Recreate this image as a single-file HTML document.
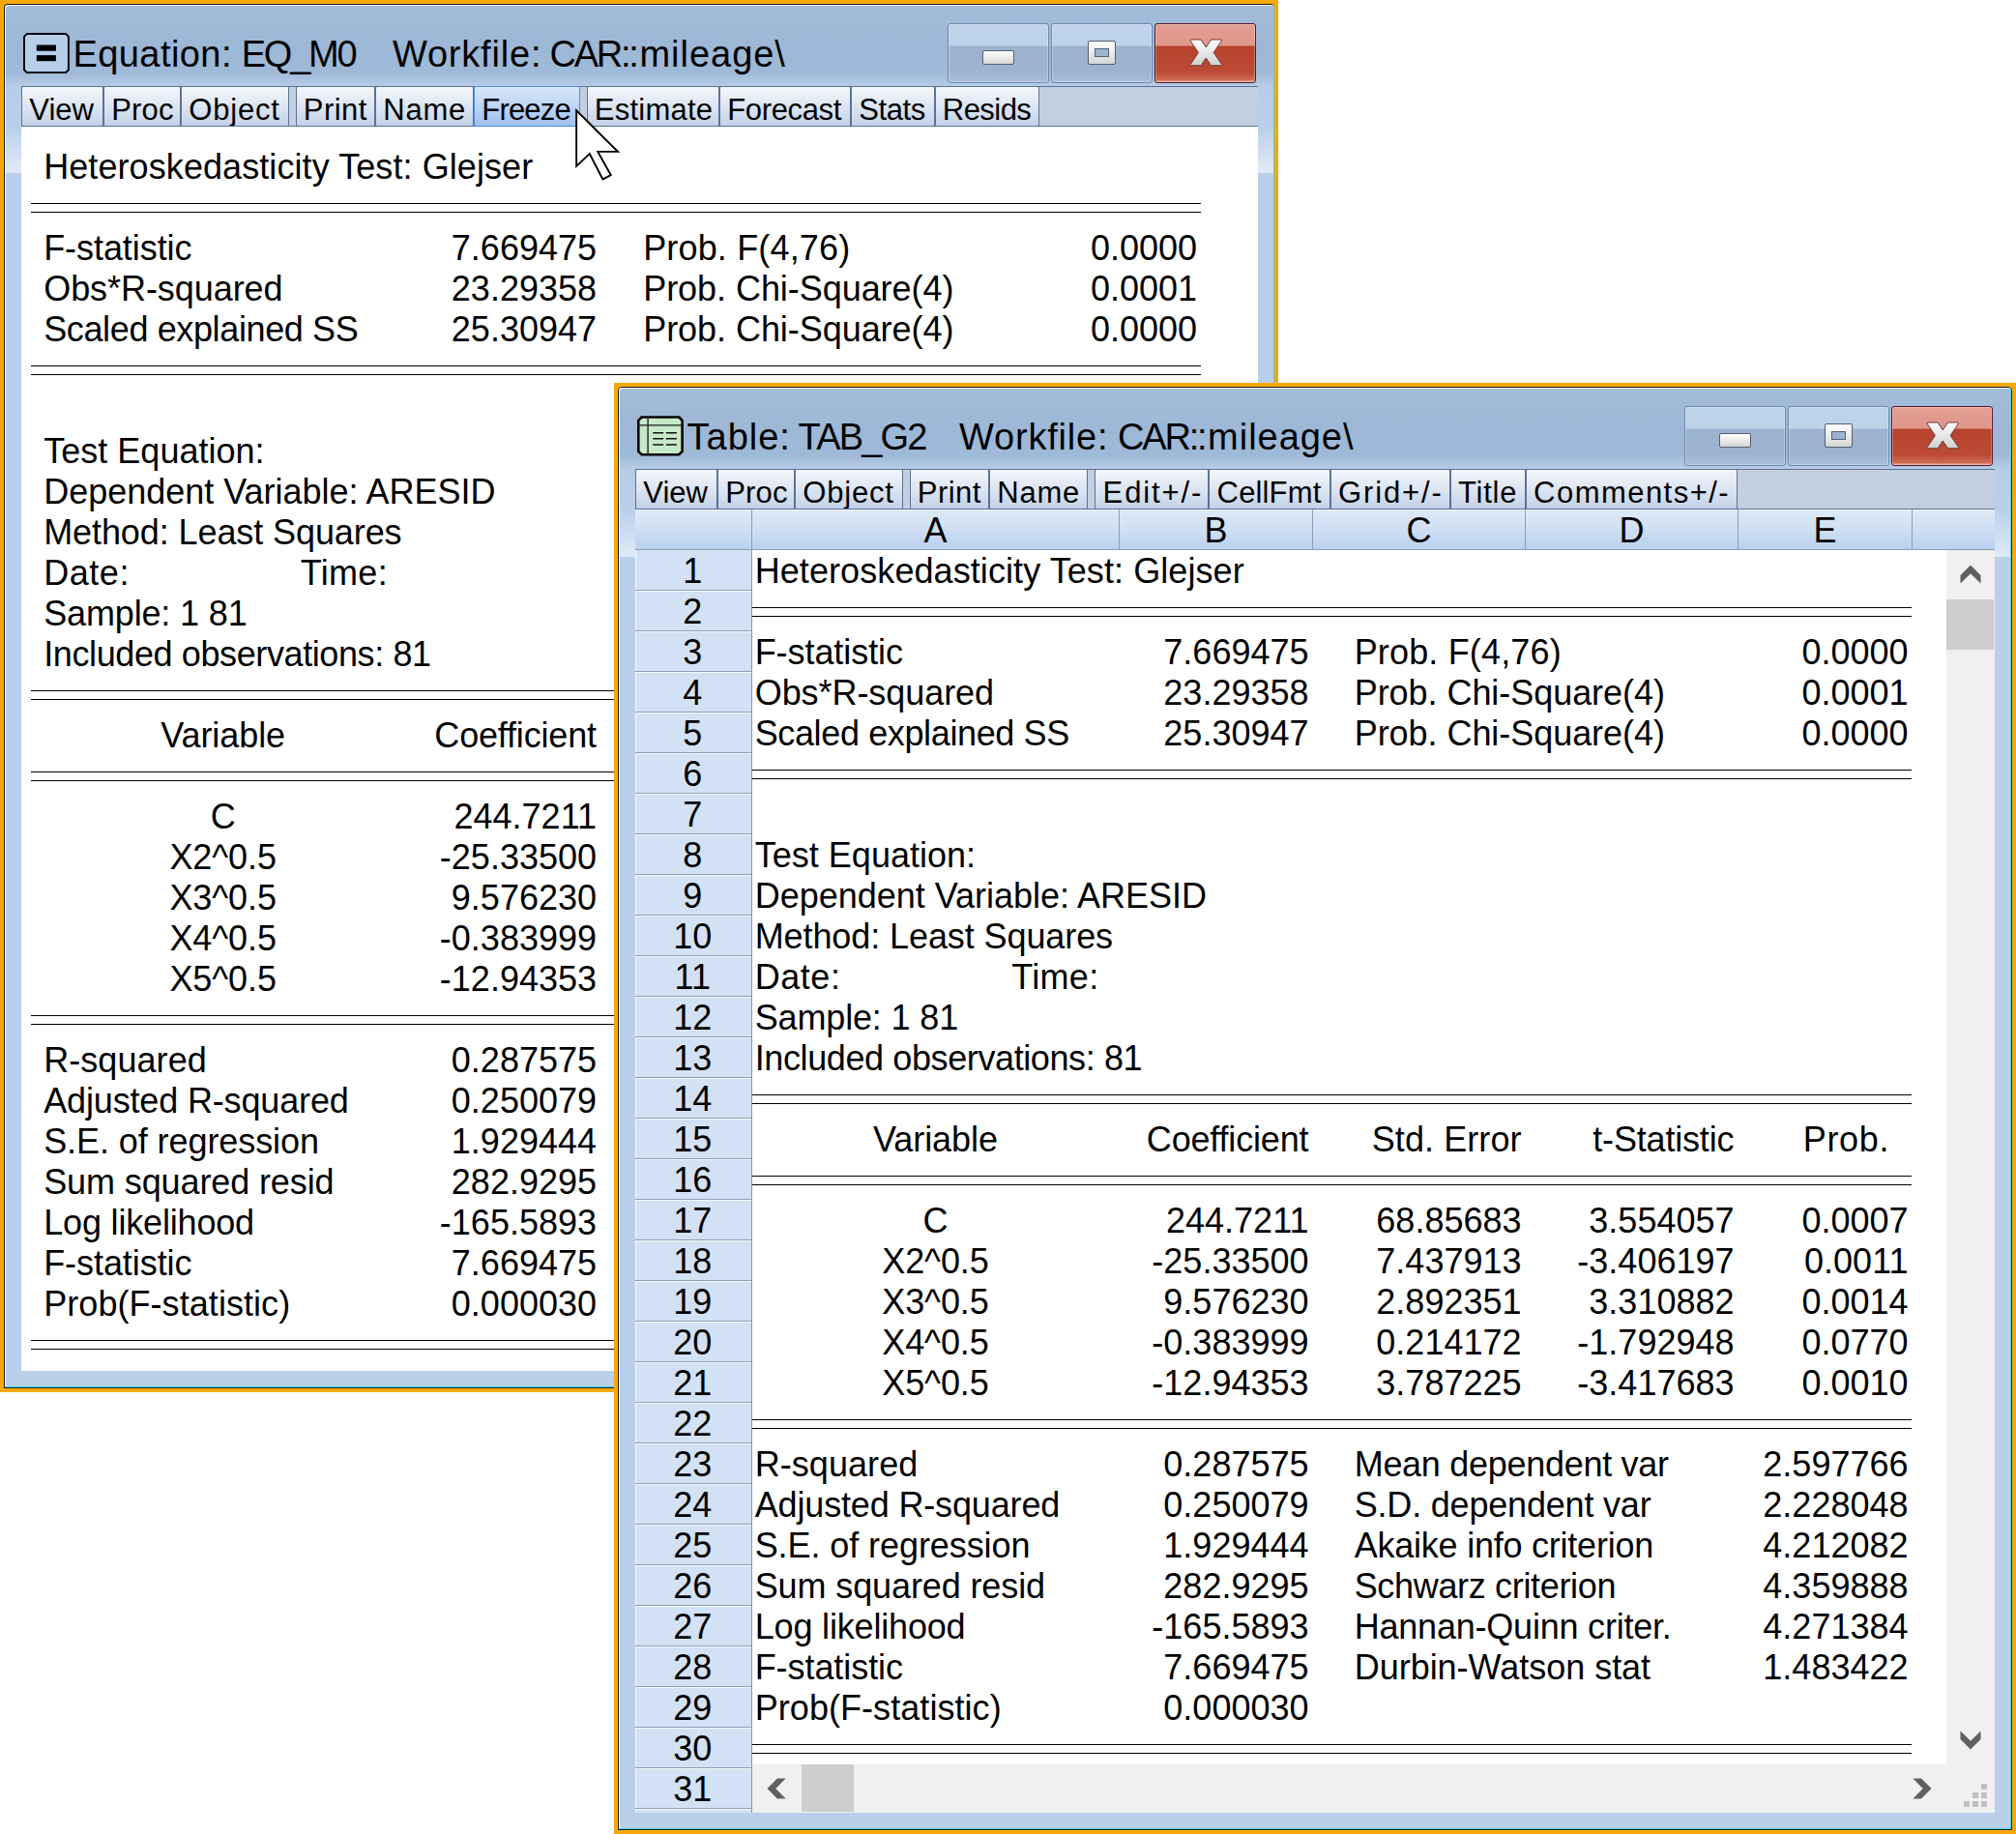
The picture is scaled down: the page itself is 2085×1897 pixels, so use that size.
<!DOCTYPE html>
<html><head><meta charset="utf-8"><title>EViews</title><style>
html,body{margin:0;padding:0;}
body{width:2085px;height:1897px;overflow:hidden;background:#fff;position:relative;font-family:"Liberation Sans",sans-serif;color:#000;}
.abs{position:absolute;}
.win{position:absolute;background:#f7a808;box-sizing:border-box;}
.frame{position:absolute;left:4px;top:4px;background:#b9cfea;border:1px solid #1c1f25;border-radius:4px 4px 0 0;overflow:hidden;box-sizing:content-box;}
.frame:after{content:'';position:absolute;left:0;top:0;right:0;bottom:0;border-radius:3px 3px 0 0;box-shadow:inset -1px -1px 0 #3fd8ff, inset 1px 1px 0 rgba(255,255,255,.8);pointer-events:none;}
.frame .tgrad{position:absolute;left:0;top:0;right:0;height:300px;}
.title{position:absolute;font-size:38px;line-height:44px;white-space:pre;height:44px;}
.tb{position:absolute;height:42px;background:#c3cfe1;border-bottom:1px solid #5a7296;border-top:1px solid #5a7296;box-sizing:border-box;}
.btn{position:absolute;top:-1px;height:42px;box-sizing:border-box;border:1px solid #5a7296;border-radius:2px;background:linear-gradient(to bottom,#f4f7fb 0%,#dfe7f3 45%,#c3d2e8 100%);font-size:31px;line-height:48px;text-align:left;white-space:pre;overflow:hidden;}
.btn.hot{background:linear-gradient(to bottom,#d9e7fa 0%,#c0d6f5 45%,#a0c0ee 100%);border-color:#4f8ae0;}
.content{position:absolute;background:#fff;overflow:hidden;}
.t{position:absolute;font-size:36px;line-height:42px;height:42px;white-space:pre;}
.r{text-align:right;}
.c{text-align:center;}
.dl{position:absolute;height:8px;border-top:1px solid #000;border-bottom:1px solid #000;box-sizing:content-box;}
.cap{position:absolute;box-sizing:border-box;border:1px solid #6f88ab;border-radius:3px;box-shadow:inset 0 0 0 1px rgba(255,255,255,.28);}
.cap.n{background:linear-gradient(to bottom,#bfd3ea 0%,#bdd1e9 37%,#9bb3d0 38%,#9db2d1 80%,#a9c0dd 100%);}
.cap.x{background:linear-gradient(to bottom,#e3a093 0%,#df9689 37%,#b8432d 38%,#bb4a34 82%,#cf6b55 96%,#f0b4a8 100%);border-color:#55162a;}
</style></head><body>
<div class="win" style="left:0;top:0;width:1322px;height:1440px">
<div class="frame" style="width:1313px;height:1430px;border-right:0"><div class="tgrad" style="background:linear-gradient(to bottom,#a3bcda 0px,#9db7d6 45px,#9fb9d8 70px,#b6cce7 84px,#b9cfea 125px,#dde9f6 170px,#dde9f6 174px,#b9cfea 174px)"></div>
<svg class="abs" style="left:18px;top:29px" width="50" height="43" viewBox="0 0 50 43"><path d="M4.8 1.1 H45.1 L47.9 3.9 V38.2 L45.1 41 H4.8 L2 38.2 V3.9 Z" fill="#b5cfeb" stroke="#0a0a0a" stroke-width="2" stroke-linejoin="round"/><rect x="14.8" y="12.5" width="20.1" height="6.2" fill="#000"/><rect x="14.8" y="23.1" width="20.1" height="6.1" fill="#000"/></svg>
<div class="title" style="left:70.4px;top:28.5px;letter-spacing:0.44px">Equation:</div>
<div class="title" style="left:244.8px;top:28.5px;letter-spacing:-2.27px">EQ_M0</div>
<div class="title" style="left:400.9px;top:28.5px;letter-spacing:0.81px">Workfile:</div>
<div class="title" style="left:563.5px;top:28.5px;letter-spacing:-2.23px">CAR::</div>
<div class="title" style="left:656.5px;top:28.5px;letter-spacing:0.97px">mileage\</div>
<div class="cap n" style="left:975px;top:19px;width:105px;height:62px"><div class="abs" style="left:35px;top:27px;width:33px;height:15px;box-sizing:border-box;border:1px solid #55606f;border-radius:2px;background:linear-gradient(#ffffff,#d6d6d6)"></div></div>
<div class="cap n" style="left:1082px;top:19px;width:105px;height:62px"><div class="abs" style="left:37px;top:17px;width:29px;height:25px;box-sizing:border-box;border:1px solid #55606f;border-radius:2px;background:linear-gradient(#ffffff,#d6d6d6)"><div class="abs" style="left:6px;top:7px;width:15px;height:9px;box-sizing:border-box;border:1px solid #55606f;background:#9bb3d0"></div></div></div>
<div class="cap x" style="left:1189px;top:19px;width:105px;height:62px"><svg class="abs" style="left:33px;top:13px" width="40" height="34" viewBox="-3 -3 40 34"><defs><linearGradient id="xg975" x1="0" y1="0" x2="0" y2="1"><stop offset="0" stop-color="#ffffff"/><stop offset="1" stop-color="#cfcfcf"/></linearGradient></defs><path d="M0.5 0 L11 0 L16.3 7.8 L21.6 0 L32.1 0 L32.6 1 L24.2 13.4 L32.6 25.8 L32.1 26.8 L21.6 26.8 L16.3 19 L11 26.8 L0.5 26.8 L0 25.8 L8.4 13.4 L0 1 Z" fill="url(#xg975)" stroke="#6d3a33" stroke-width="1" stroke-linejoin="round"/></svg></div>
<div class="tb" style="left:17px;top:84px;width:1279px">
<div class="btn" style="left:0px;width:85px;letter-spacing:0.0px;padding-left:7.3px">View</div>
<div class="btn" style="left:85px;width:80px;letter-spacing:0.13px;padding-left:7.3px">Proc</div>
<div class="btn" style="left:165px;width:111.5px;letter-spacing:0.8px;padding-left:7.3px">Object</div>
<div class="btn" style="left:283.5px;width:82.5px;letter-spacing:0.47px;padding-left:7.3px">Print</div>
<div class="btn" style="left:366px;width:102px;letter-spacing:0.77px;padding-left:7.3px">Name</div>
<div class="btn hot" style="left:468px;width:109.5px;letter-spacing:-0.82px;padding-left:7.3px">Freeze</div>
<div class="btn" style="left:584.5px;width:137.5px;letter-spacing:0.24px;padding-left:7.3px">Estimate</div>
<div class="btn" style="left:722px;width:136px;letter-spacing:-0.37px;padding-left:7.3px">Forecast</div>
<div class="btn" style="left:858px;width:86.5px;letter-spacing:-0.45px;padding-left:7.3px">Stats</div>
<div class="btn" style="left:944.5px;width:108.0px;letter-spacing:-0.54px;padding-left:7.3px">Resids</div>
</div>
<div class="content" style="left:17px;top:126px;width:1279px;height:1287px">
<div class="t" style="left:23.2px;top:21px;letter-spacing:0.08px">Heteroskedasticity Test: Glejser</div>
<div class="dl" style="left:10px;top:79px;width:1210px"></div>
<div class="t" style="left:23.2px;top:105px;letter-spacing:-0.07px">F-statistic</div>
<div class="t r" style="left:-5.0px;width:600px;top:105px">7.669475</div>
<div class="t" style="left:643.2px;top:105px;letter-spacing:0.16px">Prob. F(4,76)</div>
<div class="t r" style="left:616.0px;width:600px;top:105px">0.0000</div>
<div class="t" style="left:23.2px;top:147px;letter-spacing:-0.06px">Obs*R-squared</div>
<div class="t r" style="left:-5.0px;width:600px;top:147px">23.29358</div>
<div class="t" style="left:643.2px;top:147px;letter-spacing:-0.05px">Prob. Chi-Square(4)</div>
<div class="t r" style="left:616.0px;width:600px;top:147px">0.0001</div>
<div class="t" style="left:23.2px;top:189px;letter-spacing:-0.37px">Scaled explained SS</div>
<div class="t r" style="left:-5.0px;width:600px;top:189px">25.30947</div>
<div class="t" style="left:643.2px;top:189px;letter-spacing:-0.05px">Prob. Chi-Square(4)</div>
<div class="t r" style="left:616.0px;width:600px;top:189px">0.0000</div>
<div class="dl" style="left:10px;top:247px;width:1210px"></div>
<div class="t" style="left:23.2px;top:315px;letter-spacing:0.02px">Test Equation:</div>
<div class="t" style="left:23.2px;top:357px;letter-spacing:-0.01px">Dependent Variable: ARESID</div>
<div class="t" style="left:23.2px;top:399px;letter-spacing:-0.09px">Method: Least Squares</div>
<div class="t" style="left:23.2px;top:441px;letter-spacing:0.55px">Date:</div>
<div class="t" style="left:288.7px;top:441px;letter-spacing:0.32px">Time:</div>
<div class="t" style="left:23.2px;top:483px;letter-spacing:-0.15px">Sample: 1 81</div>
<div class="t" style="left:23.2px;top:525px;letter-spacing:-0.39px">Included observations: 81</div>
<div class="dl" style="left:10px;top:583px;width:1210px"></div>
<div class="t c" style="left:18.66px;width:380px;top:609px;letter-spacing:-0.07px">Variable</div>
<div class="t r" style="left:-5.18px;width:600px;top:609px;letter-spacing:-0.18px">Coefficient</div>
<div class="t r" style="left:216.08px;width:600px;top:609px;letter-spacing:0.08px">Std. Error</div>
<div class="t r" style="left:435.82px;width:600px;top:609px;letter-spacing:-0.18px">t-Statistic</div>
<div class="t r" style="left:596.68px;width:600px;top:609px;letter-spacing:0.68px">Prob.</div>
<div class="dl" style="left:10px;top:667px;width:1210px"></div>
<div class="t c" style="left:18.7px;width:380px;top:693px">C</div>
<div class="t r" style="left:-5.0px;width:600px;top:693px">244.7211</div>
<div class="t r" style="left:216.0px;width:600px;top:693px">68.85683</div>
<div class="t r" style="left:436.0px;width:600px;top:693px">3.554057</div>
<div class="t r" style="left:616.0px;width:600px;top:693px">0.0007</div>
<div class="t c" style="left:18.65px;width:380px;top:735px;letter-spacing:-0.1px">X2^0.5</div>
<div class="t r" style="left:-5.0px;width:600px;top:735px">-25.33500</div>
<div class="t r" style="left:216.0px;width:600px;top:735px">7.437913</div>
<div class="t r" style="left:436.0px;width:600px;top:735px">-3.406197</div>
<div class="t r" style="left:616.0px;width:600px;top:735px">0.0011</div>
<div class="t c" style="left:18.65px;width:380px;top:777px;letter-spacing:-0.1px">X3^0.5</div>
<div class="t r" style="left:-5.0px;width:600px;top:777px">9.576230</div>
<div class="t r" style="left:216.0px;width:600px;top:777px">2.892351</div>
<div class="t r" style="left:436.0px;width:600px;top:777px">3.310882</div>
<div class="t r" style="left:616.0px;width:600px;top:777px">0.0014</div>
<div class="t c" style="left:18.65px;width:380px;top:819px;letter-spacing:-0.1px">X4^0.5</div>
<div class="t r" style="left:-5.0px;width:600px;top:819px">-0.383999</div>
<div class="t r" style="left:216.0px;width:600px;top:819px">0.214172</div>
<div class="t r" style="left:436.0px;width:600px;top:819px">-1.792948</div>
<div class="t r" style="left:616.0px;width:600px;top:819px">0.0770</div>
<div class="t c" style="left:18.65px;width:380px;top:861px;letter-spacing:-0.1px">X5^0.5</div>
<div class="t r" style="left:-5.0px;width:600px;top:861px">-12.94353</div>
<div class="t r" style="left:216.0px;width:600px;top:861px">3.787225</div>
<div class="t r" style="left:436.0px;width:600px;top:861px">-3.417683</div>
<div class="t r" style="left:616.0px;width:600px;top:861px">0.0010</div>
<div class="dl" style="left:10px;top:919px;width:1210px"></div>
<div class="t" style="left:23.2px;top:945px;letter-spacing:0.06px">R-squared</div>
<div class="t r" style="left:-5.0px;width:600px;top:945px">0.287575</div>
<div class="t" style="left:643.2px;top:945px;letter-spacing:-0.29px">Mean dependent var</div>
<div class="t r" style="left:616.0px;width:600px;top:945px">2.597766</div>
<div class="t" style="left:23.2px;top:987px;letter-spacing:-0.15px">Adjusted R-squared</div>
<div class="t r" style="left:-5.0px;width:600px;top:987px">0.250079</div>
<div class="t" style="left:643.2px;top:987px;letter-spacing:-0.19px">S.D. dependent var</div>
<div class="t r" style="left:616.0px;width:600px;top:987px">2.228048</div>
<div class="t" style="left:23.2px;top:1029px;letter-spacing:-0.08px">S.E. of regression</div>
<div class="t r" style="left:-5.0px;width:600px;top:1029px">1.929444</div>
<div class="t" style="left:643.2px;top:1029px;letter-spacing:-0.23px">Akaike info criterion</div>
<div class="t r" style="left:616.0px;width:600px;top:1029px">4.212082</div>
<div class="t" style="left:23.2px;top:1071px;letter-spacing:-0.11px">Sum squared resid</div>
<div class="t r" style="left:-5.0px;width:600px;top:1071px">282.9295</div>
<div class="t" style="left:643.2px;top:1071px;letter-spacing:-0.33px">Schwarz criterion</div>
<div class="t r" style="left:616.0px;width:600px;top:1071px">4.359888</div>
<div class="t" style="left:23.2px;top:1113px;letter-spacing:-0.17px">Log likelihood</div>
<div class="t r" style="left:-5.0px;width:600px;top:1113px">-165.5893</div>
<div class="t" style="left:643.2px;top:1113px;letter-spacing:-0.21px">Hannan-Quinn criter.</div>
<div class="t r" style="left:616.0px;width:600px;top:1113px">4.271384</div>
<div class="t" style="left:23.2px;top:1155px;letter-spacing:-0.07px">F-statistic</div>
<div class="t r" style="left:-5.0px;width:600px;top:1155px">7.669475</div>
<div class="t" style="left:643.2px;top:1155px;letter-spacing:-0.02px">Durbin-Watson stat</div>
<div class="t r" style="left:616.0px;width:600px;top:1155px">1.483422</div>
<div class="t" style="left:23.2px;top:1197px;letter-spacing:0.06px">Prob(F-statistic)</div>
<div class="t r" style="left:-5.0px;width:600px;top:1197px">0.000030</div>
<div class="dl" style="left:10px;top:1255px;width:1210px"></div>
</div>
</div></div>
<div class="win" style="left:635px;top:396px;width:1450px;height:1501px">
<div class="frame" style="width:1440px;height:1491px"><div class="tgrad" style="background:linear-gradient(to bottom,#a3bcda 0px,#9db7d6 45px,#9fb9d8 70px,#b6cce7 84px,#b9cfea 125px,#dde9f6 171.5px,#dde9f6 175.5px,#b9cfea 175.5px)"></div>
<svg class="abs" style="left:18px;top:28.5px" width="50" height="43" viewBox="0 0 50 43"><path d="M5.6 1.5 H44.3 L47.6 4.8 V36.9 L44.3 40.2 H5.6 L2.3 36.9 V4.8 Z" fill="#c8e9c9" stroke="#050505" stroke-width="2.6" stroke-linejoin="round"/><path d="M2.3 9.9H47.6" stroke="#151a15" stroke-width="1.3" fill="none"/><path d="M12.1 1.5V40.2" stroke="#2a302a" stroke-width="1.5" fill="none"/><path d="M17.8 17.7H27.6M31.4 17.7H41.4M17.8 23.8H27.6M31.4 23.8H41.4M17.8 29.9H27.6M31.4 29.9H41.4" stroke="#111" stroke-width="1.5" stroke-linecap="round" fill="none"/></svg>
<div class="title" style="left:70.5px;top:28.5px;letter-spacing:1.0px">Table:</div>
<div class="title" style="left:185.6px;top:28.5px;letter-spacing:-1.8px">TAB_G2</div>
<div class="title" style="left:352px;top:28.5px;letter-spacing:0.81px">Workfile:</div>
<div class="title" style="left:516.1px;top:28.5px;letter-spacing:-2.23px">CAR::</div>
<div class="title" style="left:609.1px;top:28.5px;letter-spacing:0.97px">mileage\</div>
<div class="cap n" style="left:1102px;top:19px;width:105px;height:62px"><div class="abs" style="left:35px;top:27px;width:33px;height:15px;box-sizing:border-box;border:1px solid #55606f;border-radius:2px;background:linear-gradient(#ffffff,#d6d6d6)"></div></div>
<div class="cap n" style="left:1209px;top:19px;width:105px;height:62px"><div class="abs" style="left:37px;top:17px;width:29px;height:25px;box-sizing:border-box;border:1px solid #55606f;border-radius:2px;background:linear-gradient(#ffffff,#d6d6d6)"><div class="abs" style="left:6px;top:7px;width:15px;height:9px;box-sizing:border-box;border:1px solid #55606f;background:#9bb3d0"></div></div></div>
<div class="cap x" style="left:1316px;top:19px;width:105px;height:62px"><svg class="abs" style="left:33px;top:13px" width="40" height="34" viewBox="-3 -3 40 34"><defs><linearGradient id="xg1102" x1="0" y1="0" x2="0" y2="1"><stop offset="0" stop-color="#ffffff"/><stop offset="1" stop-color="#cfcfcf"/></linearGradient></defs><path d="M0.5 0 L11 0 L16.3 7.8 L21.6 0 L32.1 0 L32.6 1 L24.2 13.4 L32.6 25.8 L32.1 26.8 L21.6 26.8 L16.3 19 L11 26.8 L0.5 26.8 L0 25.8 L8.4 13.4 L0 1 Z" fill="url(#xg1102)" stroke="#6d3a33" stroke-width="1" stroke-linejoin="round"/></svg></div>
<div class="tb" style="left:17px;top:84px;width:1406px">
<div class="btn" style="left:0px;width:85px;letter-spacing:0.0px;padding-left:7.3px">View</div>
<div class="btn" style="left:85px;width:80px;letter-spacing:0.13px;padding-left:7.3px">Proc</div>
<div class="btn" style="left:165px;width:111.5px;letter-spacing:0.8px;padding-left:7.3px">Object</div>
<div class="btn" style="left:283.5px;width:82.5px;letter-spacing:0.47px;padding-left:7.3px">Print</div>
<div class="btn" style="left:366px;width:102px;letter-spacing:0.77px;padding-left:7.3px">Name</div>
<div class="btn" style="left:475.3px;width:118.0px;letter-spacing:1.87px;padding-left:7.3px">Edit+/-</div>
<div class="btn" style="left:593.3px;width:125.4px;letter-spacing:0.15px;padding-left:7.3px">CellFmt</div>
<div class="btn" style="left:718.7px;width:124.0px;letter-spacing:1.87px;padding-left:7.3px">Grid+/-</div>
<div class="btn" style="left:842.7px;width:78.1px;letter-spacing:0.75px;padding-left:7.3px">Title</div>
<div class="btn" style="left:920.8px;width:219.2px;letter-spacing:1.46px;padding-left:7.3px">Comments+/-</div>
</div>
<div class="content" style="left:17px;top:126px;width:1406px;height:1348px">
<div class="abs" style="left:0;top:0;width:1406px;height:41px;background:linear-gradient(to bottom,#dfe9f7 0%,#cfdff3 50%,#b9d0ef 100%);border-bottom:1px solid #8c9db5;border-top:1px solid #eef3fb;box-sizing:content-box;height:40px"></div>
<div class="abs" style="left:120.0px;top:0;width:1px;height:41px;background:#8c9db5"></div>
<div class="abs" style="left:500.0px;top:0;width:1px;height:41px;background:#8c9db5"></div>
<div class="abs" style="left:700.0px;top:0;width:1px;height:41px;background:#8c9db5"></div>
<div class="abs" style="left:920.0px;top:0;width:1px;height:41px;background:#8c9db5"></div>
<div class="abs" style="left:1140.0px;top:0;width:1px;height:41px;background:#8c9db5"></div>
<div class="abs" style="left:1320.0px;top:0;width:1px;height:41px;background:#8c9db5"></div>
<div class="t c" style="left:120.5px;width:380.0px;top:1px">A</div>
<div class="t c" style="left:500.5px;width:200.0px;top:1px">B</div>
<div class="t c" style="left:700.5px;width:220.0px;top:1px">C</div>
<div class="t c" style="left:920.5px;width:220.0px;top:1px">D</div>
<div class="t c" style="left:1140.5px;width:180.0px;top:1px">E</div>
<div class="abs" style="left:0;top:42px;width:121px;height:1306px;background:#d3e1f4;border-right:1px solid #8496b0;border-left:1px solid #f4f8fd;box-sizing:border-box"></div>
<div class="abs" style="left:0;top:83px;width:120px;height:1px;background:#8f9db3"></div>
<div class="abs" style="left:0;top:84px;width:120px;height:1px;background:#f4f8fd"></div>
<div class="t c" style="left:-1px;width:120.5px;top:43px">1</div>
<div class="abs" style="left:0;top:125px;width:120px;height:1px;background:#8f9db3"></div>
<div class="abs" style="left:0;top:126px;width:120px;height:1px;background:#f4f8fd"></div>
<div class="t c" style="left:-1px;width:120.5px;top:85px">2</div>
<div class="abs" style="left:0;top:167px;width:120px;height:1px;background:#8f9db3"></div>
<div class="abs" style="left:0;top:168px;width:120px;height:1px;background:#f4f8fd"></div>
<div class="t c" style="left:-1px;width:120.5px;top:127px">3</div>
<div class="abs" style="left:0;top:209px;width:120px;height:1px;background:#8f9db3"></div>
<div class="abs" style="left:0;top:210px;width:120px;height:1px;background:#f4f8fd"></div>
<div class="t c" style="left:-1px;width:120.5px;top:169px">4</div>
<div class="abs" style="left:0;top:251px;width:120px;height:1px;background:#8f9db3"></div>
<div class="abs" style="left:0;top:252px;width:120px;height:1px;background:#f4f8fd"></div>
<div class="t c" style="left:-1px;width:120.5px;top:211px">5</div>
<div class="abs" style="left:0;top:293px;width:120px;height:1px;background:#8f9db3"></div>
<div class="abs" style="left:0;top:294px;width:120px;height:1px;background:#f4f8fd"></div>
<div class="t c" style="left:-1px;width:120.5px;top:253px">6</div>
<div class="abs" style="left:0;top:335px;width:120px;height:1px;background:#8f9db3"></div>
<div class="abs" style="left:0;top:336px;width:120px;height:1px;background:#f4f8fd"></div>
<div class="t c" style="left:-1px;width:120.5px;top:295px">7</div>
<div class="abs" style="left:0;top:377px;width:120px;height:1px;background:#8f9db3"></div>
<div class="abs" style="left:0;top:378px;width:120px;height:1px;background:#f4f8fd"></div>
<div class="t c" style="left:-1px;width:120.5px;top:337px">8</div>
<div class="abs" style="left:0;top:419px;width:120px;height:1px;background:#8f9db3"></div>
<div class="abs" style="left:0;top:420px;width:120px;height:1px;background:#f4f8fd"></div>
<div class="t c" style="left:-1px;width:120.5px;top:379px">9</div>
<div class="abs" style="left:0;top:461px;width:120px;height:1px;background:#8f9db3"></div>
<div class="abs" style="left:0;top:462px;width:120px;height:1px;background:#f4f8fd"></div>
<div class="t c" style="left:-1px;width:120.5px;top:421px">10</div>
<div class="abs" style="left:0;top:503px;width:120px;height:1px;background:#8f9db3"></div>
<div class="abs" style="left:0;top:504px;width:120px;height:1px;background:#f4f8fd"></div>
<div class="t c" style="left:-1px;width:120.5px;top:463px">11</div>
<div class="abs" style="left:0;top:545px;width:120px;height:1px;background:#8f9db3"></div>
<div class="abs" style="left:0;top:546px;width:120px;height:1px;background:#f4f8fd"></div>
<div class="t c" style="left:-1px;width:120.5px;top:505px">12</div>
<div class="abs" style="left:0;top:587px;width:120px;height:1px;background:#8f9db3"></div>
<div class="abs" style="left:0;top:588px;width:120px;height:1px;background:#f4f8fd"></div>
<div class="t c" style="left:-1px;width:120.5px;top:547px">13</div>
<div class="abs" style="left:0;top:629px;width:120px;height:1px;background:#8f9db3"></div>
<div class="abs" style="left:0;top:630px;width:120px;height:1px;background:#f4f8fd"></div>
<div class="t c" style="left:-1px;width:120.5px;top:589px">14</div>
<div class="abs" style="left:0;top:671px;width:120px;height:1px;background:#8f9db3"></div>
<div class="abs" style="left:0;top:672px;width:120px;height:1px;background:#f4f8fd"></div>
<div class="t c" style="left:-1px;width:120.5px;top:631px">15</div>
<div class="abs" style="left:0;top:713px;width:120px;height:1px;background:#8f9db3"></div>
<div class="abs" style="left:0;top:714px;width:120px;height:1px;background:#f4f8fd"></div>
<div class="t c" style="left:-1px;width:120.5px;top:673px">16</div>
<div class="abs" style="left:0;top:755px;width:120px;height:1px;background:#8f9db3"></div>
<div class="abs" style="left:0;top:756px;width:120px;height:1px;background:#f4f8fd"></div>
<div class="t c" style="left:-1px;width:120.5px;top:715px">17</div>
<div class="abs" style="left:0;top:797px;width:120px;height:1px;background:#8f9db3"></div>
<div class="abs" style="left:0;top:798px;width:120px;height:1px;background:#f4f8fd"></div>
<div class="t c" style="left:-1px;width:120.5px;top:757px">18</div>
<div class="abs" style="left:0;top:839px;width:120px;height:1px;background:#8f9db3"></div>
<div class="abs" style="left:0;top:840px;width:120px;height:1px;background:#f4f8fd"></div>
<div class="t c" style="left:-1px;width:120.5px;top:799px">19</div>
<div class="abs" style="left:0;top:881px;width:120px;height:1px;background:#8f9db3"></div>
<div class="abs" style="left:0;top:882px;width:120px;height:1px;background:#f4f8fd"></div>
<div class="t c" style="left:-1px;width:120.5px;top:841px">20</div>
<div class="abs" style="left:0;top:923px;width:120px;height:1px;background:#8f9db3"></div>
<div class="abs" style="left:0;top:924px;width:120px;height:1px;background:#f4f8fd"></div>
<div class="t c" style="left:-1px;width:120.5px;top:883px">21</div>
<div class="abs" style="left:0;top:965px;width:120px;height:1px;background:#8f9db3"></div>
<div class="abs" style="left:0;top:966px;width:120px;height:1px;background:#f4f8fd"></div>
<div class="t c" style="left:-1px;width:120.5px;top:925px">22</div>
<div class="abs" style="left:0;top:1007px;width:120px;height:1px;background:#8f9db3"></div>
<div class="abs" style="left:0;top:1008px;width:120px;height:1px;background:#f4f8fd"></div>
<div class="t c" style="left:-1px;width:120.5px;top:967px">23</div>
<div class="abs" style="left:0;top:1049px;width:120px;height:1px;background:#8f9db3"></div>
<div class="abs" style="left:0;top:1050px;width:120px;height:1px;background:#f4f8fd"></div>
<div class="t c" style="left:-1px;width:120.5px;top:1009px">24</div>
<div class="abs" style="left:0;top:1091px;width:120px;height:1px;background:#8f9db3"></div>
<div class="abs" style="left:0;top:1092px;width:120px;height:1px;background:#f4f8fd"></div>
<div class="t c" style="left:-1px;width:120.5px;top:1051px">25</div>
<div class="abs" style="left:0;top:1133px;width:120px;height:1px;background:#8f9db3"></div>
<div class="abs" style="left:0;top:1134px;width:120px;height:1px;background:#f4f8fd"></div>
<div class="t c" style="left:-1px;width:120.5px;top:1093px">26</div>
<div class="abs" style="left:0;top:1175px;width:120px;height:1px;background:#8f9db3"></div>
<div class="abs" style="left:0;top:1176px;width:120px;height:1px;background:#f4f8fd"></div>
<div class="t c" style="left:-1px;width:120.5px;top:1135px">27</div>
<div class="abs" style="left:0;top:1217px;width:120px;height:1px;background:#8f9db3"></div>
<div class="abs" style="left:0;top:1218px;width:120px;height:1px;background:#f4f8fd"></div>
<div class="t c" style="left:-1px;width:120.5px;top:1177px">28</div>
<div class="abs" style="left:0;top:1259px;width:120px;height:1px;background:#8f9db3"></div>
<div class="abs" style="left:0;top:1260px;width:120px;height:1px;background:#f4f8fd"></div>
<div class="t c" style="left:-1px;width:120.5px;top:1219px">29</div>
<div class="abs" style="left:0;top:1301px;width:120px;height:1px;background:#8f9db3"></div>
<div class="abs" style="left:0;top:1302px;width:120px;height:1px;background:#f4f8fd"></div>
<div class="t c" style="left:-1px;width:120.5px;top:1261px">30</div>
<div class="abs" style="left:0;top:1343px;width:120px;height:1px;background:#8f9db3"></div>
<div class="abs" style="left:0;top:1344px;width:120px;height:1px;background:#f4f8fd"></div>
<div class="t c" style="left:-1px;width:120.5px;top:1303px">31</div>
<div class="abs" style="left:0;top:1385px;width:120px;height:1px;background:#8f9db3"></div>
<div class="abs" style="left:0;top:1386px;width:120px;height:1px;background:#f4f8fd"></div>
<div class="t" style="left:123.7px;top:43px;letter-spacing:0.08px">Heteroskedasticity Test: Glejser</div>
<div class="dl" style="left:120.5px;top:101px;width:1199.0px"></div>
<div class="t" style="left:123.7px;top:127px;letter-spacing:-0.07px">F-statistic</div>
<div class="t r" style="left:96.5px;width:600px;top:127px">7.669475</div>
<div class="t" style="left:743.7px;top:127px;letter-spacing:0.16px">Prob. F(4,76)</div>
<div class="t r" style="left:716.5px;width:600px;top:127px">0.0000</div>
<div class="t" style="left:123.7px;top:169px;letter-spacing:-0.06px">Obs*R-squared</div>
<div class="t r" style="left:96.5px;width:600px;top:169px">23.29358</div>
<div class="t" style="left:743.7px;top:169px;letter-spacing:-0.05px">Prob. Chi-Square(4)</div>
<div class="t r" style="left:716.5px;width:600px;top:169px">0.0001</div>
<div class="t" style="left:123.7px;top:211px;letter-spacing:-0.37px">Scaled explained SS</div>
<div class="t r" style="left:96.5px;width:600px;top:211px">25.30947</div>
<div class="t" style="left:743.7px;top:211px;letter-spacing:-0.05px">Prob. Chi-Square(4)</div>
<div class="t r" style="left:716.5px;width:600px;top:211px">0.0000</div>
<div class="dl" style="left:120.5px;top:269px;width:1199.0px"></div>
<div class="t" style="left:123.7px;top:337px;letter-spacing:0.02px">Test Equation:</div>
<div class="t" style="left:123.7px;top:379px;letter-spacing:-0.01px">Dependent Variable: ARESID</div>
<div class="t" style="left:123.7px;top:421px;letter-spacing:-0.09px">Method: Least Squares</div>
<div class="t" style="left:123.7px;top:463px;letter-spacing:0.55px">Date:</div>
<div class="t" style="left:389.2px;top:463px;letter-spacing:0.32px">Time:</div>
<div class="t" style="left:123.7px;top:505px;letter-spacing:-0.15px">Sample: 1 81</div>
<div class="t" style="left:123.7px;top:547px;letter-spacing:-0.39px">Included observations: 81</div>
<div class="dl" style="left:120.5px;top:605px;width:1199.0px"></div>
<div class="t c" style="left:120.47px;width:380.0px;top:631px;letter-spacing:-0.07px">Variable</div>
<div class="t r" style="left:96.32px;width:600px;top:631px;letter-spacing:-0.18px">Coefficient</div>
<div class="t r" style="left:316.58px;width:600px;top:631px;letter-spacing:0.08px">Std. Error</div>
<div class="t r" style="left:536.32px;width:600px;top:631px;letter-spacing:-0.18px">t-Statistic</div>
<div class="t r" style="left:697.18px;width:600px;top:631px;letter-spacing:0.68px">Prob.</div>
<div class="dl" style="left:120.5px;top:689px;width:1199.0px"></div>
<div class="t c" style="left:120.5px;width:380.0px;top:715px">C</div>
<div class="t r" style="left:96.5px;width:600px;top:715px">244.7211</div>
<div class="t r" style="left:316.5px;width:600px;top:715px">68.85683</div>
<div class="t r" style="left:536.5px;width:600px;top:715px">3.554057</div>
<div class="t r" style="left:716.5px;width:600px;top:715px">0.0007</div>
<div class="t c" style="left:120.45px;width:380.0px;top:757px;letter-spacing:-0.1px">X2^0.5</div>
<div class="t r" style="left:96.5px;width:600px;top:757px">-25.33500</div>
<div class="t r" style="left:316.5px;width:600px;top:757px">7.437913</div>
<div class="t r" style="left:536.5px;width:600px;top:757px">-3.406197</div>
<div class="t r" style="left:716.5px;width:600px;top:757px">0.0011</div>
<div class="t c" style="left:120.45px;width:380.0px;top:799px;letter-spacing:-0.1px">X3^0.5</div>
<div class="t r" style="left:96.5px;width:600px;top:799px">9.576230</div>
<div class="t r" style="left:316.5px;width:600px;top:799px">2.892351</div>
<div class="t r" style="left:536.5px;width:600px;top:799px">3.310882</div>
<div class="t r" style="left:716.5px;width:600px;top:799px">0.0014</div>
<div class="t c" style="left:120.45px;width:380.0px;top:841px;letter-spacing:-0.1px">X4^0.5</div>
<div class="t r" style="left:96.5px;width:600px;top:841px">-0.383999</div>
<div class="t r" style="left:316.5px;width:600px;top:841px">0.214172</div>
<div class="t r" style="left:536.5px;width:600px;top:841px">-1.792948</div>
<div class="t r" style="left:716.5px;width:600px;top:841px">0.0770</div>
<div class="t c" style="left:120.45px;width:380.0px;top:883px;letter-spacing:-0.1px">X5^0.5</div>
<div class="t r" style="left:96.5px;width:600px;top:883px">-12.94353</div>
<div class="t r" style="left:316.5px;width:600px;top:883px">3.787225</div>
<div class="t r" style="left:536.5px;width:600px;top:883px">-3.417683</div>
<div class="t r" style="left:716.5px;width:600px;top:883px">0.0010</div>
<div class="dl" style="left:120.5px;top:941px;width:1199.0px"></div>
<div class="t" style="left:123.7px;top:967px;letter-spacing:0.06px">R-squared</div>
<div class="t r" style="left:96.5px;width:600px;top:967px">0.287575</div>
<div class="t" style="left:743.7px;top:967px;letter-spacing:-0.29px">Mean dependent var</div>
<div class="t r" style="left:716.5px;width:600px;top:967px">2.597766</div>
<div class="t" style="left:123.7px;top:1009px;letter-spacing:-0.15px">Adjusted R-squared</div>
<div class="t r" style="left:96.5px;width:600px;top:1009px">0.250079</div>
<div class="t" style="left:743.7px;top:1009px;letter-spacing:-0.19px">S.D. dependent var</div>
<div class="t r" style="left:716.5px;width:600px;top:1009px">2.228048</div>
<div class="t" style="left:123.7px;top:1051px;letter-spacing:-0.08px">S.E. of regression</div>
<div class="t r" style="left:96.5px;width:600px;top:1051px">1.929444</div>
<div class="t" style="left:743.7px;top:1051px;letter-spacing:-0.23px">Akaike info criterion</div>
<div class="t r" style="left:716.5px;width:600px;top:1051px">4.212082</div>
<div class="t" style="left:123.7px;top:1093px;letter-spacing:-0.11px">Sum squared resid</div>
<div class="t r" style="left:96.5px;width:600px;top:1093px">282.9295</div>
<div class="t" style="left:743.7px;top:1093px;letter-spacing:-0.33px">Schwarz criterion</div>
<div class="t r" style="left:716.5px;width:600px;top:1093px">4.359888</div>
<div class="t" style="left:123.7px;top:1135px;letter-spacing:-0.17px">Log likelihood</div>
<div class="t r" style="left:96.5px;width:600px;top:1135px">-165.5893</div>
<div class="t" style="left:743.7px;top:1135px;letter-spacing:-0.21px">Hannan-Quinn criter.</div>
<div class="t r" style="left:716.5px;width:600px;top:1135px">4.271384</div>
<div class="t" style="left:123.7px;top:1177px;letter-spacing:-0.07px">F-statistic</div>
<div class="t r" style="left:96.5px;width:600px;top:1177px">7.669475</div>
<div class="t" style="left:743.7px;top:1177px;letter-spacing:-0.02px">Durbin-Watson stat</div>
<div class="t r" style="left:716.5px;width:600px;top:1177px">1.483422</div>
<div class="t" style="left:123.7px;top:1219px;letter-spacing:0.06px">Prob(F-statistic)</div>
<div class="t r" style="left:96.5px;width:600px;top:1219px">0.000030</div>
<div class="dl" style="left:120.5px;top:1277px;width:1199.0px"></div>
<div class="abs" style="left:1356px;top:42px;width:50px;height:1306px;background:#f0f0f0"></div>
<div class="abs" style="left:1356px;top:93px;width:49px;height:52px;background:#cdcdcd"></div>
<div class="abs" style="left:120.5px;top:1298px;width:1285.5px;height:50px;background:#f0f0f0"></div>
<div class="abs" style="left:172px;top:1298px;width:54px;height:49px;background:#cdcdcd"></div>
<svg class="abs" style="left:1367.5px;top:53.5px" width="26" height="26" viewBox="-13 -13 26 26"><path transform="rotate(0)" d="M0 -9.5 L10.5 0.9 L10.5 9.6 L0 -0.7 L-10.5 9.6 L-10.5 0.9 Z" fill="#606060"/></svg>
<svg class="abs" style="left:1367.5px;top:1259.5px" width="26" height="26" viewBox="-13 -13 26 26"><path transform="rotate(180)" d="M0 -9.5 L10.5 0.9 L10.5 9.6 L0 -0.7 L-10.5 9.6 L-10.5 0.9 Z" fill="#606060"/></svg>
<svg class="abs" style="left:132.5px;top:1309.5px" width="26" height="26" viewBox="-13 -13 26 26"><path transform="rotate(270)" d="M0 -9.5 L10.5 0.9 L10.5 9.6 L0 -0.7 L-10.5 9.6 L-10.5 0.9 Z" fill="#606060"/></svg>
<svg class="abs" style="left:1317.5px;top:1309.5px" width="26" height="26" viewBox="-13 -13 26 26"><path transform="rotate(90)" d="M0 -9.5 L10.5 0.9 L10.5 9.6 L0 -0.7 L-10.5 9.6 L-10.5 0.9 Z" fill="#606060"/></svg>
<div class="abs" style="left:1392px;top:1318px;width:6px;height:6px;background:#c0c0c0"></div>
<div class="abs" style="left:1383px;top:1327px;width:6px;height:6px;background:#c0c0c0"></div>
<div class="abs" style="left:1392px;top:1327px;width:6px;height:6px;background:#c0c0c0"></div>
<div class="abs" style="left:1374px;top:1336px;width:6px;height:6px;background:#c0c0c0"></div>
<div class="abs" style="left:1383px;top:1336px;width:6px;height:6px;background:#c0c0c0"></div>
<div class="abs" style="left:1392px;top:1336px;width:6px;height:6px;background:#c0c0c0"></div>
</div>
</div></div>
<svg class="abs" style="left:590px;top:108px" width="56" height="84" viewBox="0 0 56 84"><path d="M6.15 6.3 L6.15 63.9 L19.8 51.1 L33.4 77.4 L41.8 73.2 L28.3 48.9 L49 48.9 Z" fill="#fff" stroke="#000" stroke-width="1.9" stroke-linejoin="miter" stroke-miterlimit="10"/></svg>
</body></html>
